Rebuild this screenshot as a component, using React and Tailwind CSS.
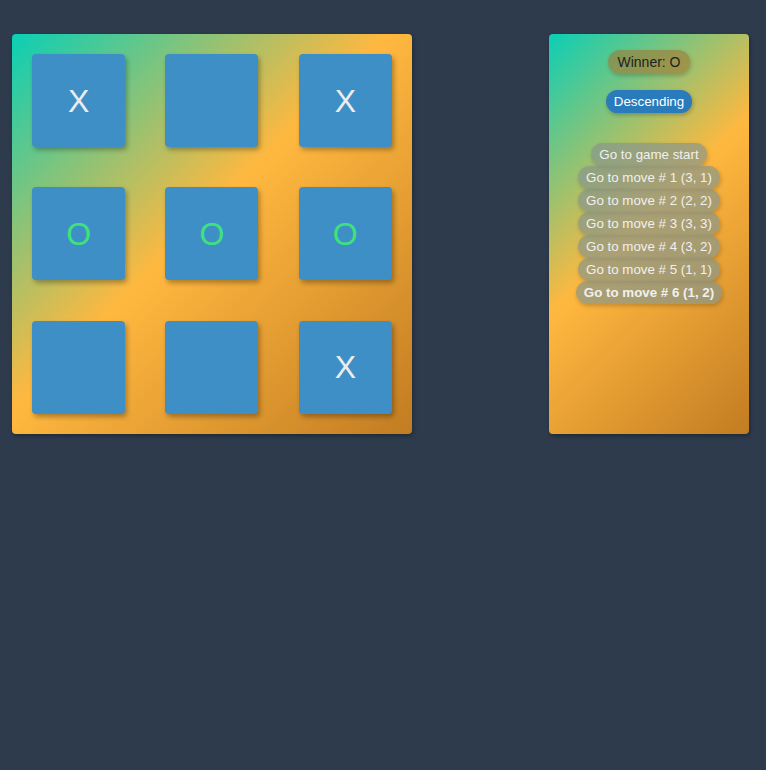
import React, { useState } from 'react';

const moves = [
  { label: 'Go to game start' },
  { label: 'Go to move # 1 (3, 1)' },
  { label: 'Go to move # 2 (2, 2)' },
  { label: 'Go to move # 3 (3, 3)' },
  { label: 'Go to move # 4 (3, 2)' },
  { label: 'Go to move # 5 (1, 1)' },
  { label: 'Go to move # 6 (1, 2)', current: true },
];

const board = ['X', null, 'X', 'O', 'O', 'O', null, null, 'X'];

const Square = ({ value }) => (
  <div className="flex items-center justify-center">
    <button
      type="button"
      className={`w-[93px] h-[93px] bg-[#3f8fc7] rounded-[4px] shadow-[2px_3px_5px_rgba(0,0,0,0.3)] flex items-center justify-center text-[32px] leading-none ${value === 'O' ? 'text-[#3ee27c]' : 'text-[#ececec]'}`}
    >
      {value}
    </button>
  </div>
);

const App = () => {
  const [descending] = useState(false);

  return (
    <div className="min-h-[770px] bg-[#2d3b4d] font-['Liberation_Sans',Arial,sans-serif] px-3 pt-[34px] flex justify-between items-start">

      {/* Board */}
      <div className="w-[400px] h-[400px] rounded-[4px] bg-[linear-gradient(135deg,#0acfb6_0%,#ffb83f_47%,#c27c22_100%)] shadow-[1px_2px_4px_rgba(0,0,0,0.3)] grid grid-cols-3 grid-rows-3">
        {board.map((v, i) => (
          <Square key={i} value={v} />
        ))}
      </div>

      {/* Game info */}
      <div className="w-[200px] h-[400px] mr-[5px] rounded-[4px] bg-[linear-gradient(135deg,#0acfb6_0%,#ffb83f_47%,#c27c22_100%)] shadow-[1px_2px_4px_rgba(0,0,0,0.3)] flex flex-col items-center pt-4">
        <div className="h-[24px] px-[9px] flex items-center rounded-full bg-[rgba(160,118,50,0.6)] text-[#1f1f1f] text-[14px] shadow-[1px_2px_4px_rgba(0,0,0,0.2)]">
          Winner: O
        </div>

        <button
          type="button"
          className="mt-4 h-[23px] px-2 rounded-full bg-[#2a7bbb] text-white text-[13.33px] shadow-[1px_2px_4px_rgba(0,0,0,0.25)]"
        >
          {descending ? 'Ascending' : 'Descending'}
        </button>

        <ol className="mt-[30px] flex flex-col items-center">
          {moves.map((m, i) => (
            <li key={i} className="flex">
              <button
                type="button"
                className={`h-[23px] px-2 rounded-full bg-[rgba(135,150,138,0.7)] text-[#f0f0f0] text-[13.33px] shadow-[1px_2px_4px_rgba(0,0,0,0.2)] ${m.current ? 'font-bold' : ''}`}
              >
                {m.label}
              </button>
            </li>
          ))}
        </ol>
      </div>
    </div>
  );
};

export default App;
